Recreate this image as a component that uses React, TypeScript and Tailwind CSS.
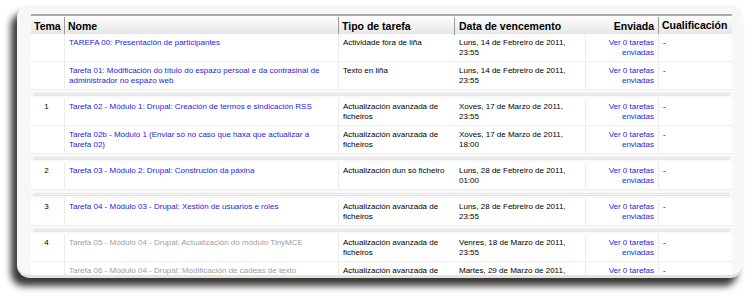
import React from "react";

type Row = {
  tema?: string;
  nome: string;
  dim?: boolean;
  tipo: string[];
  data: string[];
  env: string[];
};

const groups: Row[][] = [
  [
    {
      nome: "TAREFA 00: Presentación de participantes",
      tipo: ["Actividade fóra de liña"],
      data: ["Luns, 14 de Febreiro de 2011,", "23:55"],
      env: ["Ver 0 tarefas", "enviadas"],
    },
    {
      nome: "Tarefa 01: Modificación do título do espazo persoal e da contrasinal de|administrador no espazo web",
      tipo: ["Texto en liña"],
      data: ["Luns, 14 de Febreiro de 2011,", "23:55"],
      env: ["Ver 0 tarefas", "enviadas"],
    },
  ],
  [
    {
      tema: "1",
      nome: "Tarefa 02 - Módulo 1: Drupal: Creación de termos e sindicación RSS",
      tipo: ["Actualización avanzada de", "ficheiros"],
      data: ["Xoves, 17 de Marzo de 2011,", "23:55"],
      env: ["Ver 0 tarefas", "enviadas"],
    },
    {
      nome: "Tarefa 02b - Módulo 1 (Enviar só no caso que haxa que actualizar a|Tarefa 02)",
      tipo: ["Actualización avanzada de", "ficheiros"],
      data: ["Xoves, 17 de Marzo de 2011,", "18:00"],
      env: ["Ver 0 tarefas", "enviadas"],
    },
  ],
  [
    {
      tema: "2",
      nome: "Tarefa 03 - Módulo 2: Drupal: Construción da páxina",
      tipo: ["Actualización dun só ficheiro"],
      data: ["Luns, 28 de Febreiro de 2011,", "01:00"],
      env: ["Ver 0 tarefas", "enviadas"],
    },
  ],
  [
    {
      tema: "3",
      nome: "Tarefa 04 - Módulo 03 - Drupal: Xestión de usuarios e roles",
      tipo: ["Actualización avanzada de", "ficheiros"],
      data: ["Luns, 28 de Febreiro de 2011,", "23:55"],
      env: ["Ver 0 tarefas", "enviadas"],
    },
  ],
  [
    {
      tema: "4",
      dim: true,
      nome: "Tarefa 05 - Módulo 04 - Drupal: Actualización do módulo TinyMCE",
      tipo: ["Actualización avanzada de", "ficheiros"],
      data: ["Venres, 18 de Marzo de 2011,", "23:55"],
      env: ["Ver 0 tarefas", "enviadas"],
    },
    {
      dim: true,
      nome: "Tarefa 06 - Módulo 04 - Drupal: Modificación de cadeas de texto",
      tipo: ["Actualización avanzada de", "ficheiros"],
      data: ["Martes, 29 de Marzo de 2011,", "23:55"],
      env: ["Ver 0 tarefas", "enviadas"],
    },
  ],
];

const cols = "grid grid-cols-[34px_274px_116px_131px_73px_73px]";

function Lines({ items }: { items: string[] }) {
  return (
    <>
      {items.map((t, i) => (
        <div key={i}>{t}</div>
      ))}
    </>
  );
}

function BodyRow({ r }: { r: Row }) {
  const cell = "px-[4px] pt-[4px] pb-[3px] border-r border-[#ececec]";
  return (
    <div className={`${cols} bg-white border-b border-[#efefef] text-[8px] leading-[10px] text-black`}>
      <div className={`${cell} text-center pr-[6px]`}>{r.tema ?? ""}</div>
      <div className={`${cell} ${r.dim ? "text-[#a0a0a0]" : "text-[#1c1ce6]"}`}>
        <Lines items={r.nome.split("|")} />
      </div>
      <div className={`${cell} border-r-0`}>
        <Lines items={r.tipo} />
      </div>
      <div className={cell}>
        <Lines items={r.data} />
      </div>
      <div className={`${cell} text-right text-[#1c1ce6]`}>
        <Lines items={r.env} />
      </div>
      <div className="px-[4px] pt-[4px] pb-[3px]">-</div>
    </div>
  );
}

function Separator() {
  return (
    <div className="h-[8px] bg-[#f9f9f9] flex flex-col justify-center px-[2px]">
      <div className="h-[3px] border-t border-b border-[#e4e4e4] bg-[#f2f2f2]" />
    </div>
  );
}

export default function App() {
  return (
    <div
      className="w-[750px] h-[297px] bg-white overflow-hidden pt-[5px] pl-[17px]"
      style={{ fontFamily: '"Liberation Sans", Arial, sans-serif' }}
    >
      <div className="w-[726px] h-[273px] rounded-[13px] bg-[#f7f7f7] overflow-hidden shadow-[-6px_8px_7px_rgba(0,0,0,0.78)] border-b-[3px] border-[#e6e2d6] flex flex-col">
        <div className="pt-[9px] pl-[14px] flex-1 overflow-hidden">
          <div className="w-[701px] bg-white">
            <div
              className={`${cols} h-[20px] border-t-2 border-[#a9a9a9] bg-gradient-to-b from-white to-[#e6e6e6] text-[10.5px] font-bold text-black leading-[18px]`}
            >
              <div className="pl-[3px] border-r border-[#9a9a9a] my-[1px]">Tema</div>
              <div className="pl-[3px] border-r border-[#9a9a9a] my-[1px]">Nome</div>
              <div className="pl-[3px] border-r border-[#9a9a9a] my-[1px]">Tipo de tarefa</div>
              <div className="pl-[4px] col-span-2 flex justify-between pr-[4px] border-r border-[#9a9a9a] my-[1px]">
                <span>Data de vencemento</span>
                <span>Enviada</span>
              </div>
              <div className="pl-[3px]">Cualificación</div>
            </div>
            {groups.map((g, gi) => (
              <React.Fragment key={gi}>
                {gi > 0 && <Separator />}
                {g.map((r, ri) => (
                  <BodyRow key={ri} r={r} />
                ))}
              </React.Fragment>
            ))}
          </div>
        </div>
      </div>
    </div>
  );
}
